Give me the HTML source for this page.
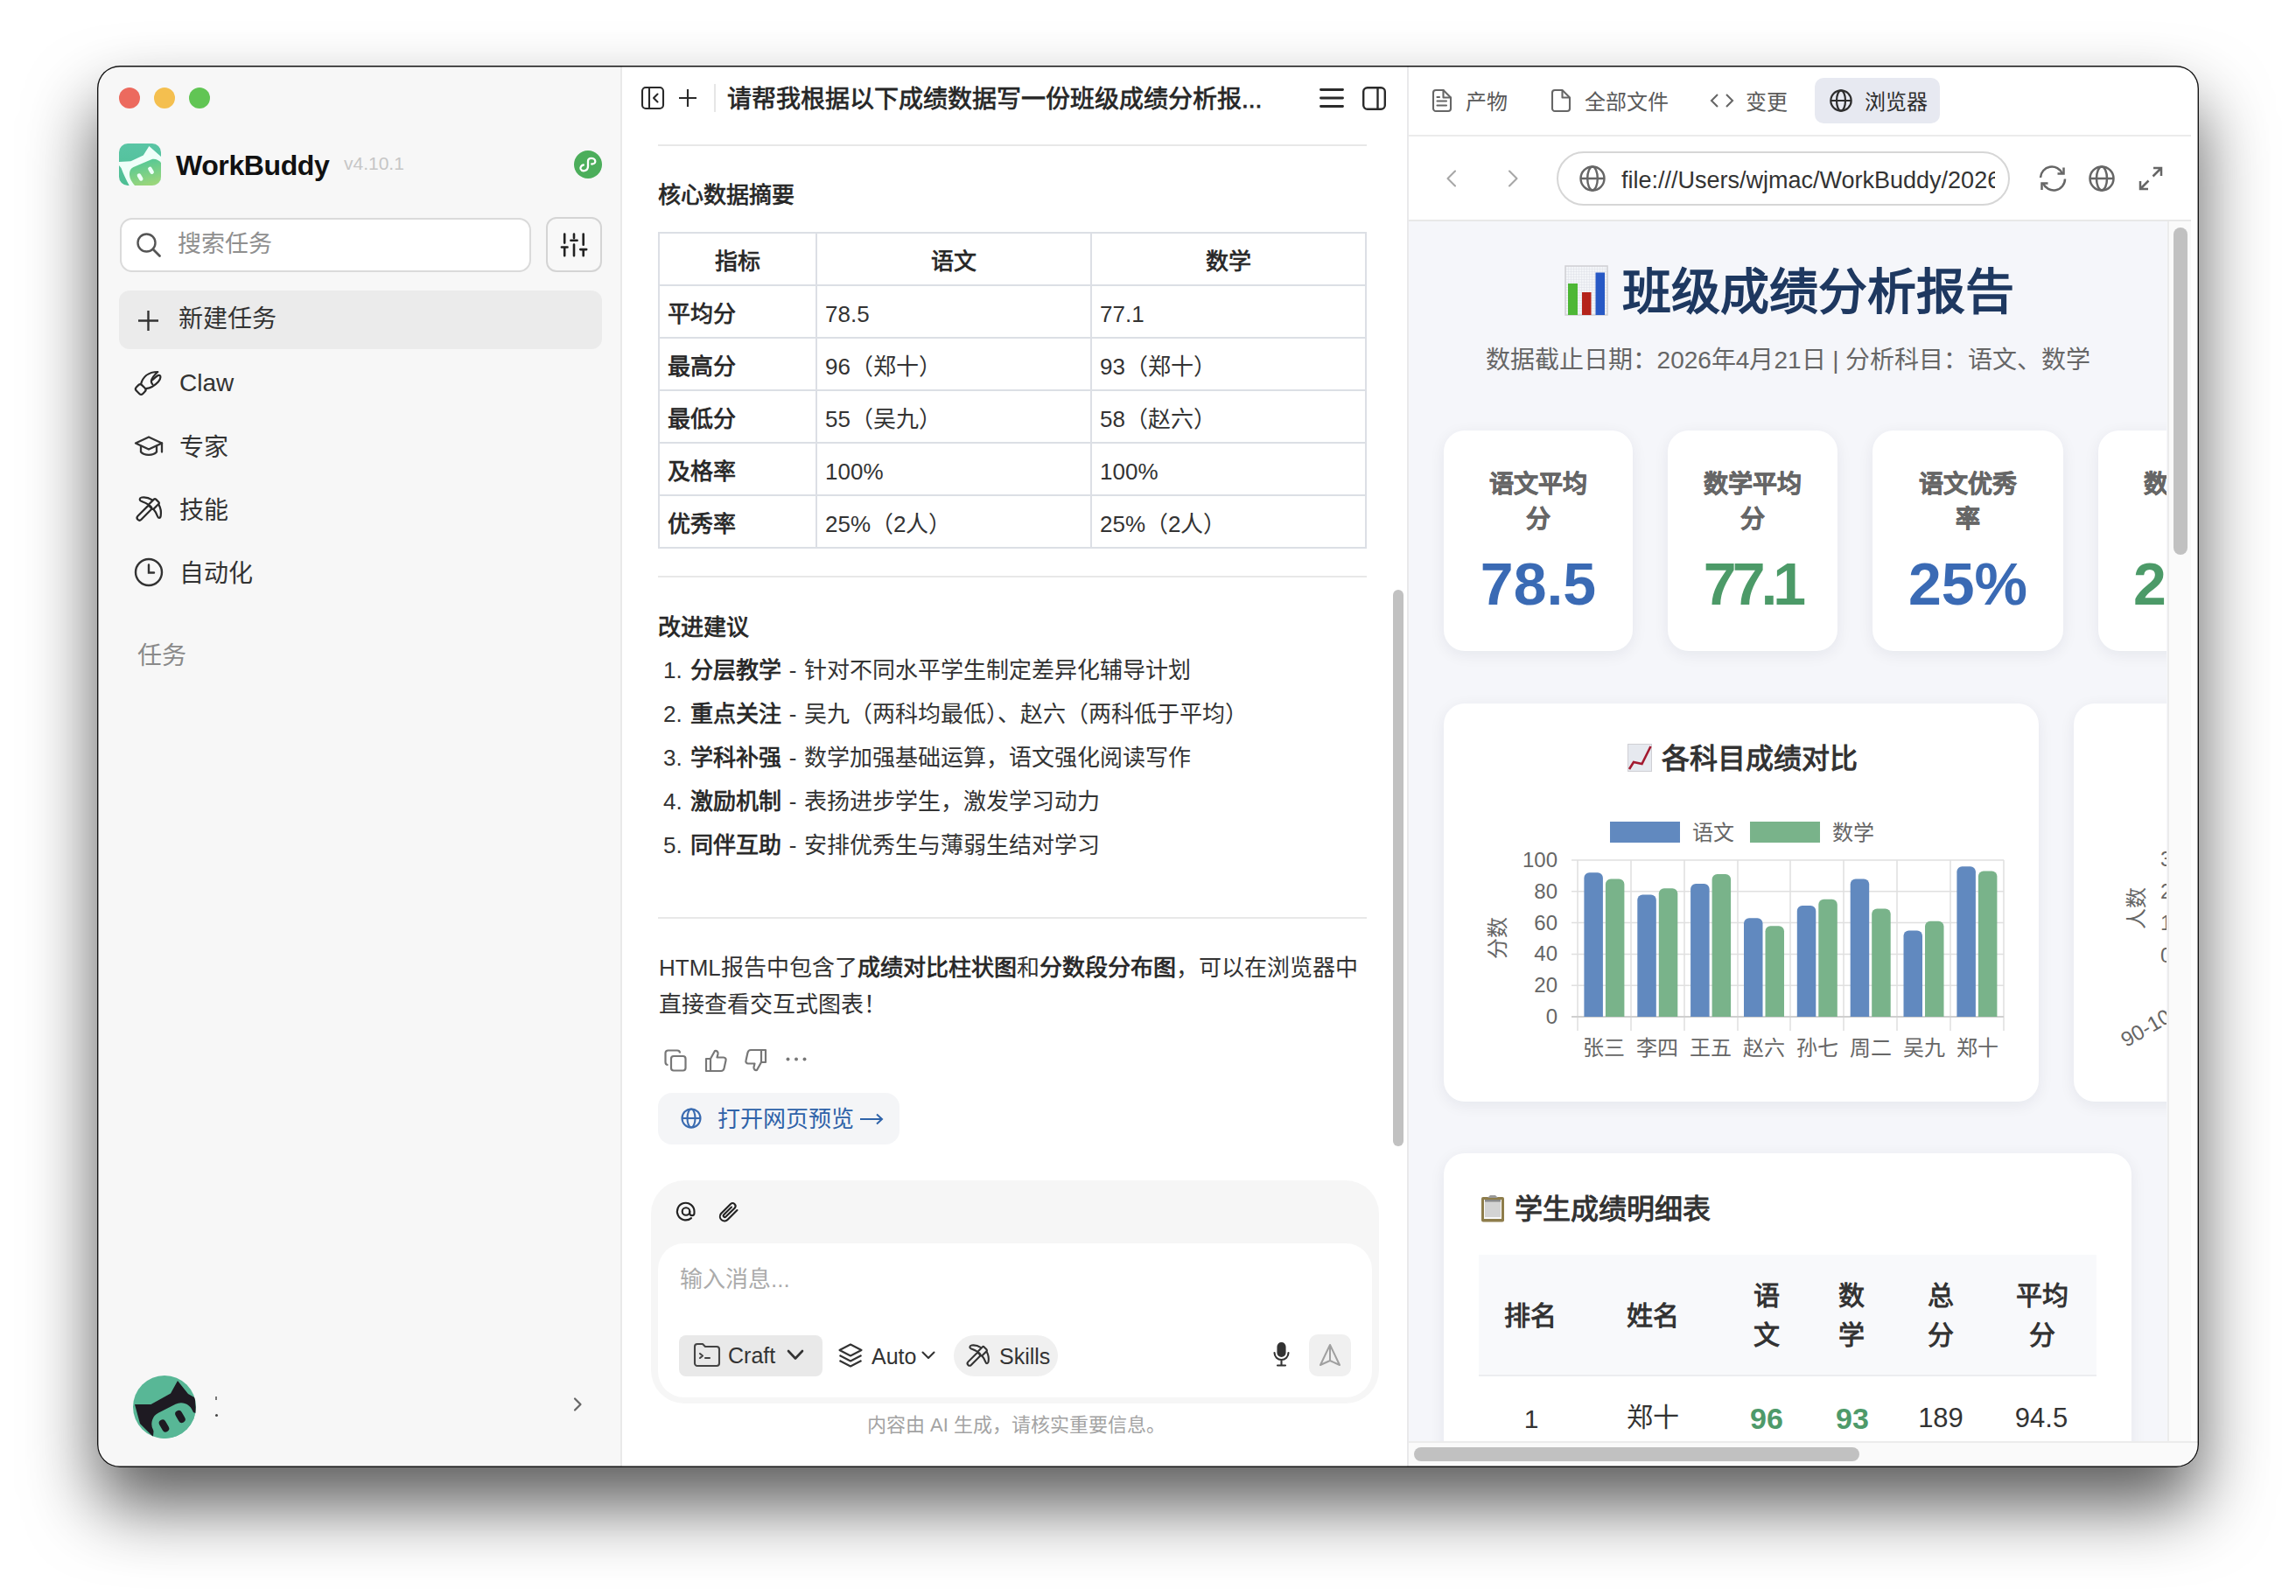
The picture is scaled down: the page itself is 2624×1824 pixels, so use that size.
<!DOCTYPE html>
<html lang="zh-CN"><head><meta charset="utf-8">
<style>
*{box-sizing:border-box;margin:0;padding:0}
html,body{width:2624px;height:1824px;overflow:hidden;background:#fff;font-family:"Liberation Sans",sans-serif;color:#333}
.a{position:absolute}
.t{position:absolute;white-space:nowrap;line-height:1}
#win{position:absolute;left:111px;top:75px;width:2402px;height:1602px;border-radius:26px;overflow:hidden;background:#fff;box-shadow:0 44px 80px rgba(0,0,0,.64)}
#st{position:absolute;left:-111px;top:-75px;width:2624px;height:1824px}
#frame{position:absolute;left:111px;top:75px;width:2402px;height:1602px;border-radius:26px;box-shadow:inset 0 0 0 1.4px rgba(0,0,0,.92);pointer-events:none}
svg{position:absolute;overflow:visible}
.sb{font-weight:normal !important;-webkit-text-stroke:0.75px currentColor}
</style></head><body>
<div id="win"><div id="st">

<!-- ============ SIDEBAR ============ -->
<div class="a" style="left:111px;top:75px;width:600px;height:1602px;background:#F7F7F7;border-right:2px solid #E9E9E9"></div>
<!-- traffic lights -->
<div class="a" style="left:136px;top:100px;width:24px;height:24px;border-radius:50%;background:#EC6A5E"></div>
<div class="a" style="left:176px;top:100px;width:24px;height:24px;border-radius:50%;background:#F4BF4F"></div>
<div class="a" style="left:216px;top:100px;width:24px;height:24px;border-radius:50%;background:#61C554"></div>

<!-- logo -->
<svg style="left:136px;top:164px" width="48" height="48" viewBox="0 0 48 48">
  <defs>
    <clipPath id="lc"><rect width="48" height="48" rx="10"/></clipPath>
    <linearGradient id="lg" x1="0.2" y1="0" x2="0.5" y2="1"><stop offset="0" stop-color="#4CC699"/><stop offset="1" stop-color="#9AD67B"/></linearGradient>
    <linearGradient id="lbg" x1="0" y1="0" x2="0" y2="1"><stop offset="0" stop-color="#5AC5A5"/><stop offset="1" stop-color="#4DBE93"/></linearGradient>
  </defs>
  <g clip-path="url(#lc)">
    <rect width="48" height="48" fill="url(#lbg)"/>
    <path d="M0,21 L13.5,20.2 L27.8,13.5 L34.4,3 L48,15 L48,48 L11.7,48 C8.5,42 5.5,36 2.5,28 L0,25 Z" fill="#EFFFF9"/>
    <path d="M12,36 C11.8,31.5 13,28.8 16.5,27 L37,18.2 C41,16.8 45.5,18.8 48,22 L48,48 L18,48 C14.5,44 12.2,40 12,36 Z" fill="url(#lg)"/>
    <rect x="21.8" y="34" width="4.6" height="9" rx="2.3" fill="#EFFFF9" transform="rotate(-30 24.1 38.5)"/>
    <rect x="34.2" y="26.3" width="4.6" height="9" rx="2.3" fill="#EFFFF9" transform="rotate(-30 36.5 30.8)"/>
  </g>
</svg>
<div class="t" style="left:201px;top:173px;font-size:32px;font-weight:bold;color:#111;letter-spacing:-0.4px">WorkBuddy</div>
<div class="t" style="left:393px;top:176px;font-size:21px;color:#C6C6C6">v4.10.1</div>
<!-- link circle -->
<div class="a" style="left:656px;top:172px;width:32px;height:32px;border-radius:50%;background:#4CAE5B"></div>
<svg style="left:656px;top:172px" width="32" height="32" viewBox="0 0 32 32">
  <path d="M10.8,16.5 C8.2,17 7,19.3 7.6,21.1 C8.4,23 10.4,23.4 12,23.1 C14.5,22.6 16,20.6 16,18 V12.3 C16,10.2 17.6,8.8 19.8,8.8 C22.4,8.8 24.3,10.5 24.3,12.4 C24.3,14.1 22.6,15.5 20.2,15.5" fill="none" stroke="#fff" stroke-width="2.3" stroke-linecap="round"/>
</svg>

<!-- search -->
<div class="a" style="left:137px;top:249px;width:470px;height:62px;border-radius:14px;background:#fff;border:2px solid #DADADA"></div>
<svg style="left:155px;top:265px" width="30" height="30" viewBox="0 0 30 30">
  <circle cx="12.5" cy="12.5" r="10" fill="none" stroke="#555" stroke-width="2.4"/>
  <path d="M20,20 L27.5,27.5" stroke="#555" stroke-width="2.8" stroke-linecap="round"/>
</svg>
<div class="t" style="left:203px;top:266px;font-size:27px;color:#8F8F8F">搜索任务</div>
<div class="a" style="left:624px;top:248px;width:64px;height:63px;border-radius:12px;background:#F8F8F8;border:2px solid #D4D4D4"></div>
<svg style="left:640px;top:265px" width="32" height="30" viewBox="0 0 32 30">
  <g stroke="#222" stroke-width="2.6" stroke-linecap="round">
    <path d="M5.2,2.6 V12.6 M1.9,17.5 H8.5 M5.2,17.5 V27.2"/>
    <path d="M16,2.6 V7 M12.4,9.8 H19.6 M16,14.6 V27.2"/>
    <path d="M26.7,2.6 V14.8 M23.3,20.1 H30.2 M26.7,20.1 V27.2"/>
  </g>
</svg>

<!-- new task -->
<div class="a" style="left:136px;top:332px;width:552px;height:67px;border-radius:12px;background:#EBEBEB"></div>
<svg style="left:158px;top:355px" width="23" height="23" viewBox="0 0 23 23"><path d="M11.5,0 V23 M0,11.5 H23" stroke="#333" stroke-width="2.4"/></svg>
<div class="t" style="left:204px;top:351px;font-size:28px;color:#333">新建任务</div>

<!-- nav -->
<svg style="left:148px;top:415px" width="44" height="44" viewBox="0 0 44 44">
  <g fill="none" stroke="#2A2A2A" stroke-width="2.2" stroke-linejoin="round" stroke-linecap="round">
    <path d="M13,24.2 C15,16.5 21,10 32.3,10 C29,13 25.2,17 24.8,20.5 C24.8,22.2 25.4,23.2 26.4,24.4"/>
    <path d="M25.6,19.6 C28.2,17.6 31.2,14.2 33.5,13.9 C36.2,13.6 36,17.8 33,21.2 C29.5,25 24.5,28.4 18.8,29.2"/>
    <rect x="8.2" y="24.8" width="9" height="10.5" rx="2.8" transform="rotate(-45 12.7 30)"/>
  </g>
</svg>
<div class="t" style="left:205px;top:424px;font-size:28px;color:#333">Claw</div>

<svg style="left:153px;top:498px" width="34" height="24" viewBox="0 0 34 24">
  <g fill="none" stroke="#333" stroke-width="2.3" stroke-linejoin="round" stroke-linecap="round">
    <path d="M17,1.5 L32,8.5 L17,15.5 L2,8.5 Z"/>
    <path d="M8,12 V18.5 C12,23 22,23 26,18.5 V12"/>
    <path d="M32,8.5 V18.5"/>
  </g>
</svg>
<div class="t" style="left:205px;top:498px;font-size:28px;color:#333">专家</div>

<svg style="left:148px;top:560px" width="44" height="44" viewBox="0 0 44 44">
  <g fill="none" stroke="#2A2A2A" stroke-width="2.2" stroke-linejoin="round" stroke-linecap="round">
    <rect x="6.4" y="23.5" width="21" height="5.6" rx="2.8" transform="rotate(-45 16.9 26.3)"/>
    <rect x="22.5" y="12.2" width="10.8" height="7.6" rx="1.6" transform="rotate(-45 27.9 16)"/>
    <path d="M25.5,11.2 C22,8.8 18,7.9 14,8.5 C11,9 11.3,11.8 13,12.6 C15.5,13.6 18.5,14.5 21,16.4"/>
    <path d="M33.4,16.6 C35.5,20.3 36.4,25 35.7,29.5 C35.2,32.6 32.8,32.4 32,30 C31,27.2 29.6,24.6 27.8,22.6"/>
  </g>
</svg>
<div class="t" style="left:205px;top:570px;font-size:28px;color:#333">技能</div>

<svg style="left:153px;top:637px" width="34" height="34" viewBox="0 0 34 34">
  <g fill="none" stroke="#333" stroke-width="2.4" stroke-linecap="round">
    <circle cx="17" cy="17" r="15"/>
    <path d="M17,8.5 V17.5 H23"/>
  </g>
</svg>
<div class="t" style="left:205px;top:642px;font-size:28px;color:#333">自动化</div>

<div class="t" style="left:157px;top:736px;font-size:28px;color:#8A8A8A">任务</div>

<!-- avatar -->
<svg style="left:152px;top:1572px" width="72" height="72" viewBox="0 0 72 72">
  <defs><clipPath id="ac"><circle cx="36" cy="36" r="36"/></clipPath></defs>
  <g clip-path="url(#ac)">
    <rect width="72" height="72" fill="#58B796"/>
    <path d="M2,33 L20.5,33 L43,20.5 L51,6 L63,21 L71,25.5 L72,43 L60,40 L24,58 L23,70 L8,55 Z" fill="#1E1A22"/>
    <rect x="21.5" y="36" width="50" height="34" rx="14" fill="#58B796" transform="rotate(-27 46.5 53)"/>
    <rect x="31.5" y="50" width="8" height="15" rx="4" fill="#1E1A22" transform="rotate(-30 35.5 57.5)"/>
    <rect x="50" y="39.5" width="8" height="15" rx="4" fill="#1E1A22" transform="rotate(-30 54 47)"/>
  </g>
</svg>
<div class="a" style="left:246px;top:1616px;width:3px;height:3px;border-radius:50%;background:#444"></div>
<div class="a" style="left:246px;top:1596px;width:1.5px;height:4px;background:#777"></div>
<svg style="left:655px;top:1597px" width="10" height="16" viewBox="0 0 10 16"><path d="M2,1.5 L8.5,8 L2,14.5" fill="none" stroke="#666" stroke-width="2.2" stroke-linecap="round" stroke-linejoin="round"/></svg>

<!-- ============ MIDDLE PANEL ============ -->
<div class="a" style="left:712px;top:75px;width:898px;height:1602px;background:#fff;border-right:2px solid #E9E9EB"></div>
<!-- header -->
<svg style="left:733px;top:99px" width="26" height="26" viewBox="0 0 26 26">
  <g fill="none" stroke="#2A2A2A" stroke-width="2.1" stroke-linecap="round" stroke-linejoin="round">
    <rect x="1" y="1" width="24" height="24" rx="4"/>
    <path d="M9,1 V25"/>
    <path d="M18.5,8.5 L14,13 L18.5,17.5"/>
  </g>
</svg>
<svg style="left:776px;top:102px" width="20" height="20" viewBox="0 0 20 20"><path d="M10,0 V20 M0,10 H20" stroke="#2A2A2A" stroke-width="2.1"/></svg>
<div class="a" style="left:816px;top:96px;width:2px;height:32px;background:#E6E6E6"></div>
<div class="t" style="left:831px;top:100px;font-size:28px;font-weight:normal;-webkit-text-stroke:0.75px currentColor;color:#262626">请帮我根据以下成绩数据写一份班级成绩分析报...</div>
<svg style="left:1508px;top:101px" width="28" height="22" viewBox="0 0 28 22">
  <g stroke="#2A2A2A" stroke-width="2.9" stroke-linecap="round"><path d="M1.5,1.5 H26.5 M1.5,11 H26.5 M1.5,20.5 H26.5"/></g>
</svg>
<svg style="left:1557px;top:99px" width="27" height="27" viewBox="0 0 27 27">
  <g fill="none" stroke="#2A2A2A" stroke-width="2.4"><rect x="1.2" y="1.2" width="24.6" height="24.6" rx="4.5"/><path d="M17.5,1.2 V25.8"/></g>
</svg>
<div class="a" style="left:752px;top:165px;width:810px;height:2px;background:#E8E8E8"></div>

<div class="t" style="left:752px;top:210px;font-size:26px;font-weight:normal;-webkit-text-stroke:0.75px currentColor;color:#262626">核心数据摘要</div>

<!-- table lines -->
<div class="a" style="left:752px;top:265px;width:810px;height:362px;border:2px solid #DCDFE5"></div>
<div class="a" style="left:752px;top:325px;width:810px;height:2px;background:#DCDFE5"></div>
<div class="a" style="left:752px;top:385px;width:810px;height:2px;background:#DCDFE5"></div>
<div class="a" style="left:752px;top:445px;width:810px;height:2px;background:#DCDFE5"></div>
<div class="a" style="left:752px;top:505px;width:810px;height:2px;background:#DCDFE5"></div>
<div class="a" style="left:752px;top:565px;width:810px;height:2px;background:#DCDFE5"></div>
<div class="a" style="left:932px;top:265px;width:2px;height:362px;background:#DCDFE5"></div>
<div class="a" style="left:1246px;top:265px;width:2px;height:362px;background:#DCDFE5"></div>
<div class="t" style="left:753px;width:180px;top:286px;text-align:center;font-size:26px;font-weight:normal;-webkit-text-stroke:0.75px currentColor;color:#262626">指标</div>
<div class="t" style="left:933px;width:314px;top:286px;text-align:center;font-size:26px;font-weight:normal;-webkit-text-stroke:0.75px currentColor;color:#262626">语文</div>
<div class="t" style="left:1247px;width:314px;top:286px;text-align:center;font-size:26px;font-weight:normal;-webkit-text-stroke:0.75px currentColor;color:#262626">数学</div>
<div class="t" style="left:763px;top:346px;font-size:26px;font-weight:normal;-webkit-text-stroke:0.75px currentColor;color:#262626">平均分</div>
<div class="t" style="left:763px;top:406px;font-size:26px;font-weight:normal;-webkit-text-stroke:0.75px currentColor;color:#262626">最高分</div>
<div class="t" style="left:763px;top:466px;font-size:26px;font-weight:normal;-webkit-text-stroke:0.75px currentColor;color:#262626">最低分</div>
<div class="t" style="left:763px;top:526px;font-size:26px;font-weight:normal;-webkit-text-stroke:0.75px currentColor;color:#262626">及格率</div>
<div class="t" style="left:763px;top:586px;font-size:26px;font-weight:normal;-webkit-text-stroke:0.75px currentColor;color:#262626">优秀率</div>
<div class="t" style="left:943px;top:346px;font-size:26px;color:#333">78.5</div>
<div class="t" style="left:943px;top:406px;font-size:26px;color:#333">96（郑十）</div>
<div class="t" style="left:943px;top:466px;font-size:26px;color:#333">55（吴九）</div>
<div class="t" style="left:943px;top:526px;font-size:26px;color:#333">100%</div>
<div class="t" style="left:943px;top:586px;font-size:26px;color:#333">25%（2人）</div>
<div class="t" style="left:1257px;top:346px;font-size:26px;color:#333">77.1</div>
<div class="t" style="left:1257px;top:406px;font-size:26px;color:#333">93（郑十）</div>
<div class="t" style="left:1257px;top:466px;font-size:26px;color:#333">58（赵六）</div>
<div class="t" style="left:1257px;top:526px;font-size:26px;color:#333">100%</div>
<div class="t" style="left:1257px;top:586px;font-size:26px;color:#333">25%（2人）</div>

<div class="a" style="left:752px;top:658px;width:810px;height:2px;background:#E8E8E8"></div>
<div class="t" style="left:752px;top:704px;font-size:26px;font-weight:normal;-webkit-text-stroke:0.75px currentColor;color:#262626">改进建议</div>

<div class="a" style="left:758px;top:741px;font-size:26px;line-height:50px;color:#333;white-space:nowrap;word-spacing:1.5px">
<div><span style="display:inline-block;width:31px">1.</span><b style="font-weight:normal;-webkit-text-stroke:0.75px currentColor;color:#262626">分层教学</b> - 针对不同水平学生制定差异化辅导计划</div>
<div><span style="display:inline-block;width:31px">2.</span><b style="font-weight:normal;-webkit-text-stroke:0.75px currentColor;color:#262626">重点关注</b> - 吴九（两科均最低）、赵六（两科低于平均）</div>
<div><span style="display:inline-block;width:31px">3.</span><b style="font-weight:normal;-webkit-text-stroke:0.75px currentColor;color:#262626">学科补强</b> - 数学加强基础运算，语文强化阅读写作</div>
<div><span style="display:inline-block;width:31px">4.</span><b style="font-weight:normal;-webkit-text-stroke:0.75px currentColor;color:#262626">激励机制</b> - 表扬进步学生，激发学习动力</div>
<div><span style="display:inline-block;width:31px">5.</span><b style="font-weight:normal;-webkit-text-stroke:0.75px currentColor;color:#262626">同伴互助</b> - 安排优秀生与薄弱生结对学习</div>
</div>

<div class="a" style="left:752px;top:1048px;width:810px;height:2px;background:#E8E8E8"></div>
<div class="a" style="left:753px;top:1085px;font-size:26px;line-height:42px;color:#333;white-space:nowrap">
<div>HTML报告中包含了<b style="font-weight:normal;-webkit-text-stroke:0.75px currentColor;color:#262626">成绩对比柱状图</b>和<b style="font-weight:normal;-webkit-text-stroke:0.75px currentColor;color:#262626">分数段分布图</b>，可以在浏览器中</div>
<div>直接查看交互式图表！</div>
</div>

<!-- action icons -->
<svg style="left:759px;top:1199px" width="26" height="26" viewBox="0 0 26 26">
  <g fill="none" stroke="#777" stroke-width="2.2" stroke-linejoin="round">
    <rect x="8" y="8" width="16.5" height="16.5" rx="3"/>
    <path d="M4.5,18 a3,3 0 0 1 -3,-3 V4.5 a3,3 0 0 1 3,-3 H15 a3,3 0 0 1 3,3"/>
  </g>
</svg>
<svg style="left:805px;top:1199px" width="26" height="26" viewBox="0 0 26 26">
  <g fill="none" stroke="#777" stroke-width="2.2" stroke-linejoin="round" stroke-linecap="round">
    <path d="M7,11 V25 H2 V11 Z"/>
    <path d="M7,11 L12,2 C14,1.5 16,3 15.5,5.5 L14.5,9.5 H22 C24,9.5 25,11.5 24.5,13 L22.5,22 C22,24 21,25 19,25 H7"/>
  </g>
</svg>
<svg style="left:851px;top:1199px" width="26" height="26" viewBox="0 0 26 26">
  <g fill="none" stroke="#777" stroke-width="2.2" stroke-linejoin="round" stroke-linecap="round" transform="rotate(180 13 13)">
    <path d="M7,11 V25 H2 V11 Z"/>
    <path d="M7,11 L12,2 C14,1.5 16,3 15.5,5.5 L14.5,9.5 H22 C24,9.5 25,11.5 24.5,13 L22.5,22 C22,24 21,25 19,25 H7"/>
  </g>
</svg>
<svg style="left:898px;top:1208px" width="24" height="5" viewBox="0 0 24 5"><g fill="#777"><circle cx="2.5" cy="2.5" r="2"/><circle cx="12" cy="2.5" r="2"/><circle cx="21.5" cy="2.5" r="2"/></g></svg>

<!-- preview button -->
<div class="a" style="left:752px;top:1249px;width:276px;height:59px;border-radius:16px;background:#F4F5F7"></div>
<svg style="left:778px;top:1266px" width="24" height="24" viewBox="0 0 24 24">
  <g fill="none" stroke="#3A6BB0" stroke-width="2.1"><circle cx="12" cy="12" r="10.5"/><ellipse cx="12" cy="12" rx="4.5" ry="10.5"/><path d="M1.5,12 H22.5"/></g>
</svg>
<div class="t" style="left:820px;top:1266px;font-size:26px;font-weight:500;color:#2F63A9">打开网页预览</div>
<svg style="left:982px;top:1272px" width="28" height="14" viewBox="0 0 28 14"><path d="M1,7 H26 M20,1.5 L26,7 L20,12.5" fill="none" stroke="#2F63A9" stroke-width="2"/></svg>

<!-- scrollbar -->
<div class="a" style="left:1592px;top:674px;width:12px;height:636px;border-radius:6px;background:#C1C1C1"></div>

<!-- input -->
<div class="a" style="left:744px;top:1349px;width:832px;height:255px;border-radius:38px;background:#F6F6F6"></div>
<div class="a" style="left:752px;top:1421px;width:816px;height:176px;border-radius:30px;background:#fff"></div>
<svg style="left:772px;top:1373px" width="24" height="24" viewBox="0 0 24 24">
  <g fill="none" stroke="#222" stroke-width="2.1" stroke-linecap="round">
    <circle cx="12" cy="11.5" r="4.3"/>
    <path d="M16.3,11.5 V13.5 a2.6,2.6 0 0 0 5.2,0 V11.5 a9.8,9.8 0 1 0 -3.5,7.6"/>
  </g>
</svg>
<svg style="left:820px;top:1372px" width="25" height="26" viewBox="0 0 25 26">
  <path d="M22.5,11 L12,21.5 a5,5 0 0 1 -8,-6.5 L15,4 a3.3,3.3 0 0 1 4.8,4.5 L9.5,18.5 a1.6,1.6 0 0 1 -2.3,-2.3 L16,7.5" fill="none" stroke="#222" stroke-width="2.1" stroke-linecap="round"/>
</svg>
<div class="t" style="left:777px;top:1449px;font-size:26px;color:#ABABAB">输入消息...</div>

<div class="a" style="left:776px;top:1526px;width:164px;height:47px;border-radius:8px;background:#E9E9E9"></div>
<svg style="left:793px;top:1535px" width="30" height="27" viewBox="0 0 30 27">
  <g fill="none" stroke="#444" stroke-width="2.1" stroke-linejoin="round" stroke-linecap="round">
    <path d="M1,4 a3,3 0 0 1 3,-3 H10 L13,4 H26 a3,3 0 0 1 3,3 V23 a3,3 0 0 1 -3,3 H4 a3,3 0 0 1 -3,-3 Z"/>
    <path d="M7,12 L10,14.5 L7,17 M13,17 H18"/>
  </g>
</svg>
<div class="t" style="left:832px;top:1537px;font-size:25px;color:#333">Craft</div>
<svg style="left:899px;top:1542px" width="20" height="13" viewBox="0 0 20 13"><path d="M2,2 L10,10.5 L18,2" fill="none" stroke="#333" stroke-width="2.6" stroke-linecap="round" stroke-linejoin="round"/></svg>

<svg style="left:958px;top:1535px" width="28" height="28" viewBox="0 0 28 28">
  <g fill="none" stroke="#333" stroke-width="2.1" stroke-linejoin="round">
    <path d="M14,1.5 L26.5,8 L14,14.5 L1.5,8 Z"/>
    <path d="M1.5,14 L14,20.5 L26.5,14"/>
    <path d="M1.5,20 L14,26.5 L26.5,20"/>
  </g>
</svg>
<div class="t" style="left:996px;top:1538px;font-size:25px;color:#333">Auto</div>
<svg style="left:1053px;top:1544px" width="16" height="10" viewBox="0 0 16 10"><path d="M1.5,1.5 L8,8 L14.5,1.5" fill="none" stroke="#333" stroke-width="2.1" stroke-linecap="round" stroke-linejoin="round"/></svg>

<div class="a" style="left:1090px;top:1526px;width:119px;height:47px;border-radius:24px;background:#F0F0F0"></div>
<svg style="left:1098px;top:1530px" width="39" height="39" viewBox="0 0 44 44">
  <g fill="none" stroke="#333" stroke-width="2.35" stroke-linejoin="round" stroke-linecap="round">
    <rect x="6.4" y="23.5" width="21" height="5.6" rx="2.8" transform="rotate(-45 16.9 26.3)"/>
    <rect x="22.5" y="12.2" width="10.8" height="7.6" rx="1.6" transform="rotate(-45 27.9 16)"/>
    <path d="M25.5,11.2 C22,8.8 18,7.9 14,8.5 C11,9 11.3,11.8 13,12.6 C15.5,13.6 18.5,14.5 21,16.4"/>
    <path d="M33.4,16.6 C35.5,20.3 36.4,25 35.7,29.5 C35.2,32.6 32.8,32.4 32,30 C31,27.2 29.6,24.6 27.8,22.6"/>
  </g>
</svg>
<div class="t" style="left:1142px;top:1538px;font-size:25px;color:#333">Skills</div>

<svg style="left:1455px;top:1534px" width="19" height="28" viewBox="0 0 19 28">
  <g fill="none" stroke="#333" stroke-width="2.1" stroke-linecap="round">
    <rect x="5.5" y="1" width="8" height="15" rx="4" fill="#333"/>
    <path d="M1.5,12 a8,8 0 0 0 16,0 M9.5,20 V26.5 M5,26.5 H14"/>
  </g>
</svg>
<div class="a" style="left:1496px;top:1525px;width:48px;height:48px;border-radius:10px;background:#F0F0F0"></div>
<svg style="left:1506px;top:1535px" width="28" height="28" viewBox="0 0 28 28">
  <path d="M14,2 L25,25 L14,20 L3,25 Z M14,2 V20" fill="none" stroke="#A0A0A0" stroke-width="2" stroke-linejoin="round"/>
</svg>

<div class="t" style="left:991px;top:1618px;font-size:22px;color:#A3A3A3">内容由 AI 生成，请核实重要信息。</div>


<!-- ============ RIGHT PANEL ============ -->
<div class="a" style="left:1610px;top:75px;width:902px;height:1602px;background:#fff"></div>
<!-- tabs -->
<svg style="left:1637px;top:102px" width="22" height="26" viewBox="0 0 22 26">
  <g fill="none" stroke="#666" stroke-width="2.1" stroke-linejoin="round" stroke-linecap="round">
    <path d="M4,1 H12.5 L21,9.5 V22 a3,3 0 0 1 -3,3 H4 a3,3 0 0 1 -3,-3 V4 a3,3 0 0 1 3,-3 Z"/>
    <path d="M12.5,1 V9.5 H21"/>
    <path d="M5.5,9 H8 M5.5,13.5 H16 M5.5,18.5 H16"/>
  </g>
</svg>
<div class="t" style="left:1675px;top:105px;font-size:24px;color:#5A5A5A">产物</div>
<svg style="left:1773px;top:102px" width="22" height="26" viewBox="0 0 22 26">
  <g fill="none" stroke="#666" stroke-width="2.1" stroke-linejoin="round">
    <path d="M4,1 H12.5 L21,9.5 V22 a3,3 0 0 1 -3,3 H4 a3,3 0 0 1 -3,-3 V4 a3,3 0 0 1 3,-3 Z"/>
    <path d="M12.5,1 V9.5 H21"/>
  </g>
</svg>
<div class="t" style="left:1811px;top:105px;font-size:24px;color:#5A5A5A">全部文件</div>
<svg style="left:1955px;top:107px" width="26" height="16" viewBox="0 0 26 16">
  <g fill="none" stroke="#666" stroke-width="2.1" stroke-linecap="butt" stroke-linejoin="miter"><path d="M8,1 L1,8 L8,15 M18,1 L25,8 L18,15"/></g>
</svg>
<div class="t" style="left:1995px;top:105px;font-size:24px;color:#5A5A5A">变更</div>
<div class="a" style="left:2074px;top:89px;width:143px;height:52px;border-radius:10px;background:#E7E9F1"></div>
<svg style="left:2091px;top:102px" width="26" height="26" viewBox="0 0 26 26">
  <g fill="none" stroke="#2E2E2E" stroke-width="2.2"><circle cx="13" cy="13" r="11.7"/><ellipse cx="13" cy="13" rx="5" ry="11.7"/><path d="M1.3,13 H24.7"/></g>
</svg>
<div class="t" style="left:2131px;top:105px;font-size:24px;color:#2E2E2E">浏览器</div>
<div class="a" style="left:1610px;top:154px;width:894px;height:2px;background:#EBEBEB"></div>

<!-- toolbar -->
<svg style="left:1652px;top:194px" width="13" height="20" viewBox="0 0 13 20"><path d="M11,1.5 L2.5,10 L11,18.5" fill="none" stroke="#A6A6A6" stroke-width="2.1" stroke-linecap="round" stroke-linejoin="round"/></svg>
<svg style="left:1723px;top:194px" width="13" height="20" viewBox="0 0 13 20"><path d="M2,1.5 L10.5,10 L2,18.5" fill="none" stroke="#A6A6A6" stroke-width="2.1" stroke-linecap="round" stroke-linejoin="round"/></svg>
<div class="a" style="left:1779px;top:173px;width:518px;height:62px;border-radius:31px;border:2px solid #D6D6D6;background:#fff"></div>
<svg style="left:1805px;top:189px" width="30" height="30" viewBox="0 0 30 30">
  <g fill="none" stroke="#666" stroke-width="2.4"><circle cx="15" cy="15" r="13.5"/><ellipse cx="15" cy="15" rx="5.8" ry="13.5"/><path d="M1.5,15 H28.5"/></g>
</svg>
<div class="a" style="left:1853px;top:186px;width:427px;height:36px;overflow:hidden">
  <div class="t" style="left:0;top:7px;font-size:27px;color:#333">file:///Users/wjmac/WorkBuddy/2026</div>
</div>
<svg style="left:2331px;top:189px" width="30" height="30" viewBox="0 0 30 30">
  <g fill="none" stroke="#666" stroke-width="2.5" stroke-linecap="butt" stroke-linejoin="miter">
    <path d="M1,14 A13,13 0 0 1 26,9.5"/>
    <path d="M27.5,2.5 V9.5 H20.5"/>
    <path d="M29,15.5 A13,13 0 0 1 4,20.5"/>
    <path d="M2.5,28 V20.5 H9.5"/>
  </g>
</svg>
<svg style="left:2387px;top:189px" width="30" height="30" viewBox="0 0 30 30">
  <g fill="none" stroke="#666" stroke-width="2.5"><circle cx="15" cy="15" r="13.5"/><ellipse cx="15" cy="15" rx="6" ry="13.5"/><path d="M1.5,15 H28.5"/></g>
</svg>
<svg style="left:2444px;top:190px" width="28" height="28" viewBox="0 0 28 28">
  <g fill="none" stroke="#666" stroke-width="2.5" stroke-linecap="butt" stroke-linejoin="miter">
    <path d="M17,2 H26 V11 M26,2 L16.5,11.5"/>
    <path d="M11,26 H2 V17 M2,26 L11.5,16.5"/>
  </g>
</svg>
<div class="a" style="left:1610px;top:251px;width:894px;height:2px;background:#E8E8E8"></div>

<!-- page viewport -->
<div class="a" style="left:1610px;top:253px;width:867px;height:1394px;background:#F5F6FA;overflow:hidden">
<div class="a" style="left:-1610px;top:-253px;width:2624px;height:1824px">

  <!-- title -->
  <svg style="left:1789px;top:304px" width="48" height="56" viewBox="0 0 48 56">
    <defs><pattern id="gp" width="3" height="3" patternUnits="userSpaceOnUse"><rect width="3" height="3" fill="#F3F5F8"/><path d="M0,0 H3 M0,0 V3" stroke="#D9DDE3" stroke-width="0.8"/></pattern></defs>
    <rect x="0" y="0" width="48" height="56" fill="url(#gp)"/>
    <rect x="0" y="0" width="48" height="56" fill="none" stroke="#CFCFD4" stroke-width="1.5"/>
    <rect x="3" y="20" width="11" height="36" fill="#4DB735"/>
    <rect x="19" y="30" width="10.5" height="26" fill="#B5231A"/>
    <rect x="34.5" y="7.5" width="10.5" height="48.5" fill="#2859C5"/>
  </svg>
  <div class="t" style="left:1854px;top:306px;font-size:56px;font-weight:bold;color:#1E3860">班级成绩分析报告</div>
  <div class="t" style="left:1610px;width:867px;text-align:center;top:398px;font-size:28px;color:#666">数据截止日期：2026年4月21日 | 分析科目：语文、数学</div>

  <!-- stat cards -->
  <div class="a" style="left:1650px;top:492px;width:216px;height:252px;border-radius:24px;background:#fff;box-shadow:0 4px 18px rgba(20,30,60,.07)"></div>
  <div class="a" style="left:1906px;top:492px;width:194px;height:252px;border-radius:24px;background:#fff;box-shadow:0 4px 18px rgba(20,30,60,.07)"></div>
  <div class="a" style="left:2140px;top:492px;width:218px;height:252px;border-radius:24px;background:#fff;box-shadow:0 4px 18px rgba(20,30,60,.07)"></div>
  <div class="a" style="left:2398px;top:492px;width:216px;height:252px;border-radius:24px;background:#fff;box-shadow:0 4px 18px rgba(20,30,60,.07)"></div>

  <div class="a" style="left:1650px;width:216px;top:534px;text-align:center;font-size:28px;line-height:40px;font-weight:bold;color:#666;-webkit-text-stroke:0.6px #666">语文平均<br>分</div>
  <div class="a" style="left:1906px;width:194px;top:534px;text-align:center;font-size:28px;line-height:40px;font-weight:bold;color:#666;-webkit-text-stroke:0.6px #666">数学平均<br>分</div>
  <div class="a" style="left:2140px;width:218px;top:534px;text-align:center;font-size:28px;line-height:40px;font-weight:bold;color:#666;-webkit-text-stroke:0.6px #666">语文优秀<br>率</div>
  <div class="a" style="left:2398px;width:216px;top:534px;text-align:center;font-size:28px;line-height:40px;font-weight:bold;color:#666;-webkit-text-stroke:0.6px #666">数学优秀<br>率</div>

  <div class="t" style="left:1650px;width:216px;top:633px;text-align:center;font-size:68px;font-weight:bold;color:#3A6AB4">78.5</div>
  <div class="t" style="left:1906px;width:194px;top:633px;text-align:center;font-size:68px;font-weight:bold;color:#4C9A68;letter-spacing:-5px">77.1</div>
  <div class="t" style="left:2140px;width:218px;top:633px;text-align:center;font-size:68px;font-weight:bold;color:#3A6AB4">25%</div>
  <div class="t" style="left:2398px;width:216px;top:633px;text-align:center;font-size:68px;font-weight:bold;color:#4C9A68">25%</div>

  <!-- chart card 1 -->
  <div class="a" style="left:1650px;top:804px;width:680px;height:455px;border-radius:24px;background:#fff;box-shadow:0 4px 18px rgba(20,30,60,.07)"></div>
  <svg style="left:1860px;top:850px" width="28" height="32" viewBox="0 0 28 32">
    <rect x="0.5" y="0.5" width="27" height="31" fill="#E6E9EF" stroke="#CFCFD4" stroke-width="1"/>
    <path d="M2,29 L7,21 L16.5,23 L26.5,3" fill="none" stroke="#A3192F" stroke-width="2.6" stroke-linejoin="miter"/>
  </svg>
  <div class="t" style="left:1899px;top:851px;font-size:32px;font-weight:bold;color:#333">各科目成绩对比</div>

  <svg style="left:0;top:0" width="2624" height="1824" viewBox="0 0 2624 1824">
    <rect x="1840" y="939" width="80" height="24" fill="#6189BF"/>
    <rect x="2000" y="939" width="80" height="24" fill="#79B38A"/>
    <g stroke="#E0E0E0" stroke-width="1.5">
      <path d="M1796,983 H2290 M1796,1018.8 H2290 M1796,1054.6 H2290 M1796,1090.4 H2290 M1796,1126.2 H2290"/>
      <path d="M1803,983 V1178 M1864,983 V1178 M1925,983 V1178 M1986,983 V1178 M2046,983 V1178 M2107,983 V1178 M2168,983 V1178 M2229,983 V1178 M2290,983 V1178"/>
    </g>
    <path d="M1796,1162 H2290" stroke="#CFCFCF" stroke-width="2"/>
    <g><path d="M1810.4,1162 V1003.3 a6,6 0 0 1 6,-6 H1825.9 a6,6 0 0 1 6,6 V1162 Z" fill="#6189BF"/>
<path d="M1834.9,1162 V1010.5 a6,6 0 0 1 6,-6 H1850.4 a6,6 0 0 1 6,6 V1162 Z" fill="#79B38A"/>
<path d="M1871.3,1162 V1028.4 a6,6 0 0 1 6,-6 H1886.8 a6,6 0 0 1 6,6 V1162 Z" fill="#6189BF"/>
<path d="M1895.8,1162 V1021.2 a6,6 0 0 1 6,-6 H1911.3 a6,6 0 0 1 6,6 V1162 Z" fill="#79B38A"/>
<path d="M1932.1,1162 V1015.9 a6,6 0 0 1 6,-6 H1947.6 a6,6 0 0 1 6,6 V1162 Z" fill="#6189BF"/>
<path d="M1956.6,1162 V1005.1 a6,6 0 0 1 6,-6 H1972.1 a6,6 0 0 1 6,6 V1162 Z" fill="#79B38A"/>
<path d="M1993.0,1162 V1055.2 a6,6 0 0 1 6,-6 H2008.5 a6,6 0 0 1 6,6 V1162 Z" fill="#6189BF"/>
<path d="M2017.5,1162 V1064.2 a6,6 0 0 1 6,-6 H2033.0 a6,6 0 0 1 6,6 V1162 Z" fill="#79B38A"/>
<path d="M2053.8,1162 V1040.9 a6,6 0 0 1 6,-6 H2069.3 a6,6 0 0 1 6,6 V1162 Z" fill="#6189BF"/>
<path d="M2078.3,1162 V1033.8 a6,6 0 0 1 6,-6 H2093.8 a6,6 0 0 1 6,6 V1162 Z" fill="#79B38A"/>
<path d="M2114.7,1162 V1010.5 a6,6 0 0 1 6,-6 H2130.2 a6,6 0 0 1 6,6 V1162 Z" fill="#6189BF"/>
<path d="M2139.2,1162 V1044.5 a6,6 0 0 1 6,-6 H2154.7 a6,6 0 0 1 6,6 V1162 Z" fill="#79B38A"/>
<path d="M2175.5,1162 V1069.5 a6,6 0 0 1 6,-6 H2191.0 a6,6 0 0 1 6,6 V1162 Z" fill="#6189BF"/>
<path d="M2200.0,1162 V1058.8 a6,6 0 0 1 6,-6 H2215.5 a6,6 0 0 1 6,6 V1162 Z" fill="#79B38A"/>
<path d="M2236.4,1162 V996.2 a6,6 0 0 1 6,-6 H2251.9 a6,6 0 0 1 6,6 V1162 Z" fill="#6189BF"/>
<path d="M2260.9,1162 V1001.5 a6,6 0 0 1 6,-6 H2276.4 a6,6 0 0 1 6,6 V1162 Z" fill="#79B38A"/></g>
  </svg>
  <div class="t" style="left:1934px;top:940px;font-size:24px;color:#666">语文</div>
  <div class="t" style="left:2094px;top:940px;font-size:24px;color:#666">数学</div>
  <div class="a" style="left:1700px;top:965px;width:80px;font-size:24px;line-height:35.8px;text-align:right;color:#666">100<br>80<br>60<br>40<br>20<br>0</div>
  <div class="t" style="left:1688px;top:1060px;font-size:24px;color:#666;transform:rotate(-90deg);transform-origin:center">分数</div>
  <div class="a" style="left:1803px;top:1186px;width:487px;font-size:24px;color:#666;white-space:nowrap;line-height:1">
    <span style="display:inline-block;width:60.9px;text-align:center">张三</span><span style="display:inline-block;width:60.9px;text-align:center">李四</span><span style="display:inline-block;width:60.9px;text-align:center">王五</span><span style="display:inline-block;width:60.9px;text-align:center">赵六</span><span style="display:inline-block;width:60.9px;text-align:center">孙七</span><span style="display:inline-block;width:60.9px;text-align:center">周二</span><span style="display:inline-block;width:60.9px;text-align:center">吴九</span><span style="display:inline-block;width:60.9px;text-align:center">郑十</span>
  </div>

  <!-- chart card 2 (partial) -->
  <div class="a" style="left:2370px;top:804px;width:680px;height:455px;border-radius:24px;background:#fff;box-shadow:0 4px 18px rgba(20,30,60,.07)"></div>
  <div class="t" style="left:2418px;top:1026px;font-size:24px;color:#666;transform:rotate(-90deg)">人数</div>
  <div class="a" style="left:2469px;top:964px;width:40px;font-size:24px;line-height:36.7px;text-align:left;color:#666">3<br>2<br>1<br>0</div>
  <div class="t" style="left:2420px;top:1180px;font-size:24px;color:#666;transform:rotate(-30deg);transform-origin:left top">90-100</div>
  <div class="a" style="left:2476px;top:0;width:200px;height:1824px;background:#F5F6FA"></div>

  <!-- table card -->
  <div class="a" style="left:1650px;top:1318px;width:786px;height:600px;border-radius:24px;background:#fff;box-shadow:0 4px 18px rgba(20,30,60,.07)"></div>
  <svg style="left:1692px;top:1364px" width="28" height="33" viewBox="0 0 28 33">
    <rect x="1" y="4" width="26" height="28.5" rx="2" fill="#8E7D4B"/>
    <rect x="4" y="7" width="20" height="22" fill="#FAFAFA"/>
    <rect x="5" y="9" width="18" height="18" fill="#D3D3D3"/>
    <path d="M8,5 H20 L17,2 H11 Z" fill="#9A9A9A"/>
    <rect x="5" y="7" width="18" height="2.5" fill="#8A8A8A"/>
  </svg>
  <div class="t" style="left:1731px;top:1366px;font-size:32px;font-weight:bold;color:#333">学生成绩明细表</div>
  <div class="a" style="left:1690px;top:1434px;width:706px;height:139px;background:#F8F9FB;border-bottom:2px solid #ECEDF0"></div>
  <div class="t" style="left:1719px;top:1489px;font-size:30px;font-weight:bold;color:#333">排名</div>
  <div class="t" style="left:1859px;top:1489px;font-size:30px;font-weight:bold;color:#333">姓名</div>
  <div class="a" style="left:1990px;width:58px;top:1458px;text-align:center;font-size:30px;line-height:45px;font-weight:bold;color:#333">语<br>文</div>
  <div class="a" style="left:2087px;width:58px;top:1458px;text-align:center;font-size:30px;line-height:45px;font-weight:bold;color:#333">数<br>学</div>
  <div class="a" style="left:2189px;width:58px;top:1458px;text-align:center;font-size:30px;line-height:45px;font-weight:bold;color:#333">总<br>分</div>
  <div class="a" style="left:2303px;width:62px;top:1458px;text-align:center;font-size:30px;line-height:45px;font-weight:bold;color:#333">平均<br>分</div>
  <div class="t" style="left:1700px;width:100px;top:1607px;text-align:center;font-size:30px;color:#333">1</div>
  <div class="t" style="left:1859px;top:1605px;font-size:30px;color:#333">郑十</div>
  <div class="t" style="left:1969px;width:100px;top:1604px;text-align:center;font-size:34px;font-weight:bold;color:#4E9A6A">96</div>
  <div class="t" style="left:2067px;width:100px;top:1604px;text-align:center;font-size:34px;font-weight:bold;color:#4E9A6A">93</div>
  <div class="t" style="left:2168px;width:100px;top:1605px;text-align:center;font-size:31px;color:#333">189</div>
  <div class="t" style="left:2283px;width:100px;top:1605px;text-align:center;font-size:31px;color:#333">94.5</div>
</div>
</div>

<!-- scroll tracks -->
<div class="a" style="left:2477px;top:253px;width:27px;height:1394px;background:#FAFAFA;border-left:2px solid #ECECEC"></div>
<div class="a" style="left:2484px;top:260px;width:16px;height:374px;border-radius:8px;background:#C1C1C1"></div>
<div class="a" style="left:1610px;top:1647px;width:902px;height:30px;background:#FAFAFA;border-top:2px solid #ECECEC"></div>
<div class="a" style="left:1616px;top:1654px;width:509px;height:16px;border-radius:8px;background:#C1C1C1"></div>


</div></div>
<div id="frame"></div>
</body></html>
